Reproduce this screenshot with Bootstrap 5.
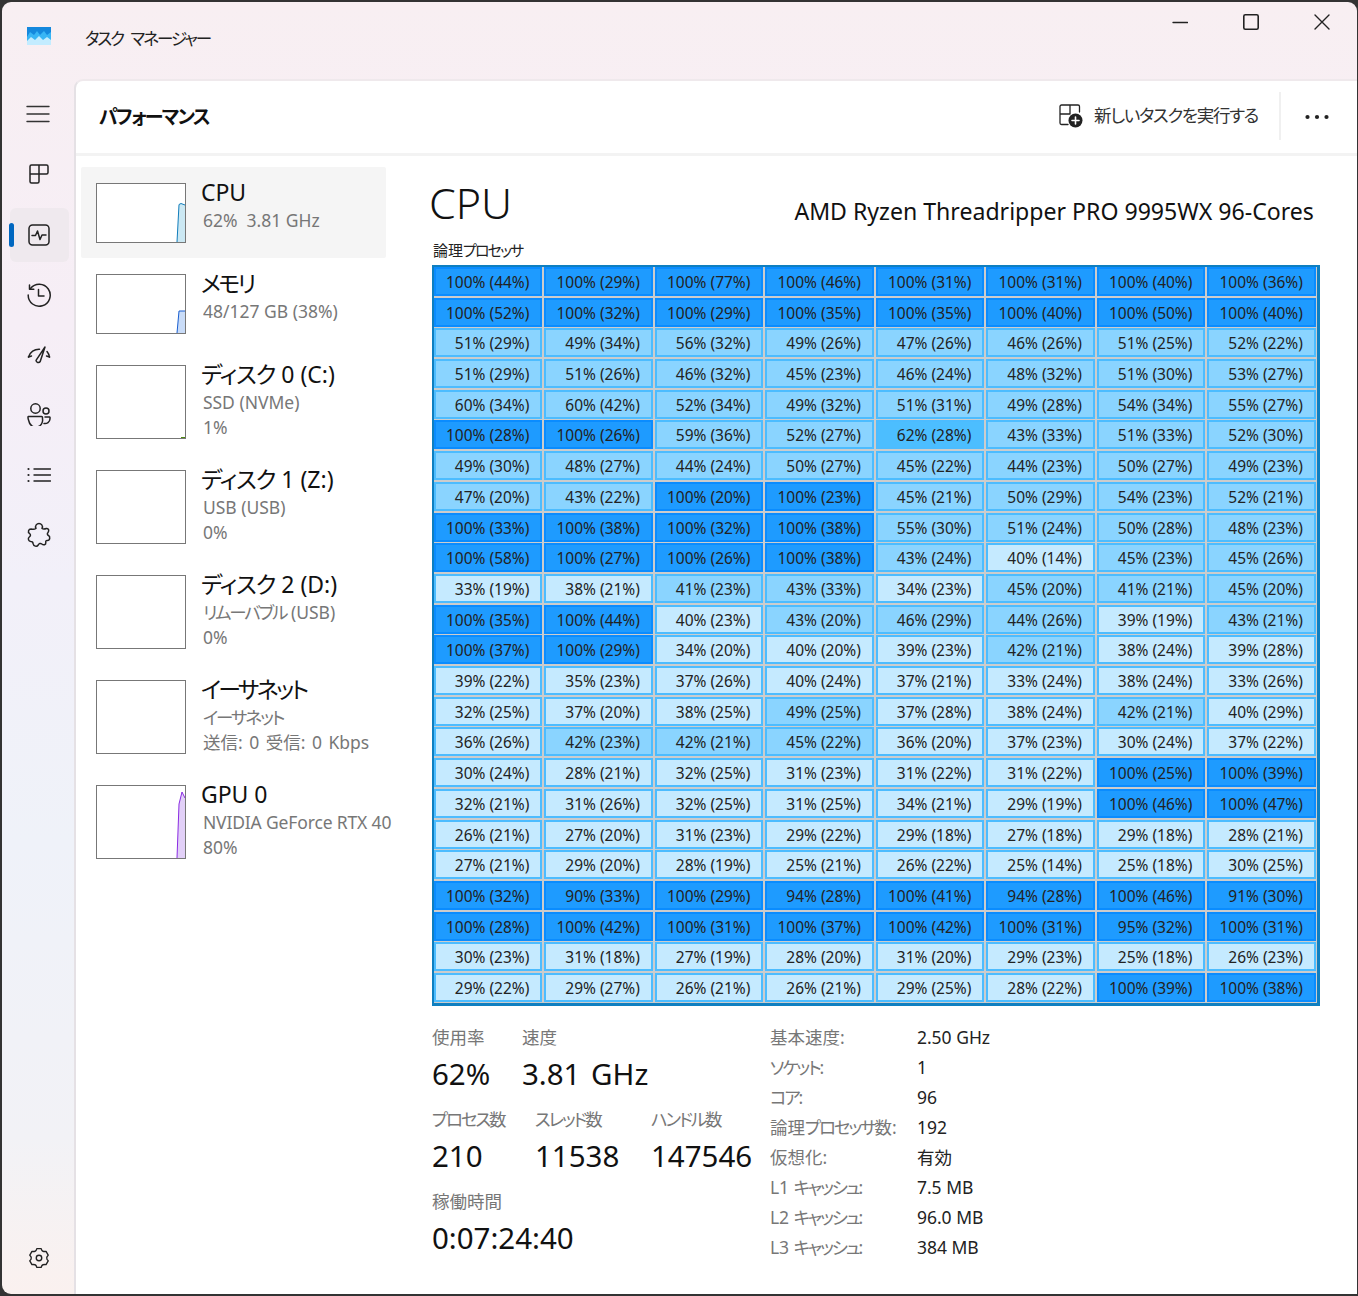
<!doctype html>
<html lang="ja"><head><meta charset="utf-8"><title>タスク マネージャー</title>
<link href="https://cdn.jsdelivr.net/npm/bootstrap@5.3.0/dist/css/bootstrap.min.css" rel="stylesheet">
<style>
html,body{height:1296px;overflow:hidden}
body{background:#333;font-family:"Noto Sans","Noto Sans CJK JP",sans-serif;font-feature-settings:"palt";color:#111;padding:2px 1px 2px 2px}
.tm-win{height:1292px;border-radius:9px 9px 0 9px;background:linear-gradient(180deg,#f8eff2 0,#f6eef6 25%,#f2f0f9 45%,#eff2f9 65%,#f2f2f6 88%,#faf1ef 100%);overflow:hidden}
.tm-title{height:77px}
.tm-appname{font-size:16.5px;letter-spacing:-.12em;word-spacing:5px;margin-left:83px;margin-top:-3px;color:#222;width:1000px}
.tm-logo{position:absolute}
.tm-ctl{height:42px;width:71px}
.tm-side{width:72px;padding:9px 0;gap:6.14px}
.tm-nav{width:59px;height:54px;margin-left:8px;border-radius:6px}
.tm-nav svg{margin-right:1px}
.tm-nav svg.tm-ham{margin:0 3px 2px 0}
.tm-nav svg.tm-up{margin-bottom:2px}
.tm-nav svg.tm-up2{margin-bottom:4px}
.tm-nav.tm-on{background:#efe9ee}
.tm-ind{position:absolute;left:-1px;top:15px;width:5px;height:24px;background:#0067c0;border-radius:3px}
.tm-panel{background:#fff;border-left:2px solid #e5e1e5;border-top:2px solid #efe9ec;border-top-left-radius:9px;min-width:0}
.tm-cmd{height:75px;border-bottom:3px solid #f3f3f3;padding-left:23px}
.tm-h1{font-size:19px;letter-spacing:-.09em;font-weight:600;margin:1px 0 0;color:#111}
.tm-cmdic{margin-top:-2px}
.tm-run{font-size:17.5px;letter-spacing:-1.3px;color:#333;margin:-3px 0 0 11px}
.tm-vline{width:2px;height:48px;background:#f0f0f0;margin:-3px 0 0 21px}
.tm-dots{margin-left:24px}
.tm-list{width:325px;padding-top:11px;overflow:hidden;flex:none}
.tm-item{padding:16px 0 15px 15px;margin-left:5px;width:305px;white-space:nowrap}
.tm-item.tm-sel{background:#f5f5f5;border-radius:2px}
.tm-thumb{width:90px;flex:none;border:1px solid #777;background:#fff;display:block}
.tm-t60{height:60px}.tm-t74{height:74px}
.tm-itxt{margin:-4px 0 -6px 15px;overflow:visible}
.tm-iname{font-size:23px;line-height:26px;color:#111;margin-bottom:3px}
.tm-isub{font-size:17.5px;line-height:25px;color:#777;margin-left:2px;width:196px;overflow:hidden}
.tm-send{word-spacing:2px}
.tm-gpu{letter-spacing:-.15px}
.tm-kana{letter-spacing:-.12em}
.tm-kana2{letter-spacing:-.05em}
.tm-detail{width:958px;padding-left:29px;padding-top:19px}
.tm-cpu{font-size:43px;font-weight:300;line-height:56px;margin:0 0 0 -1px;color:#111}
.tm-model{font-size:23.1px;color:#111;margin:19px 1px 0 0}
.tm-lp{font-size:15px;line-height:20px;margin:9px 0 5px 3px;color:#222}
.tm-grid{margin-left:2px;width:888px;height:741px;background:#ccc;border:solid #0f7fc0;border-width:2px 3px 3px 2px;padding:0 1px 1px 0;display:grid;grid-template-columns:repeat(8,1fr);grid-template-rows:repeat(24,1fr);column-gap:2px;row-gap:1.7px}
.tm-c{border:2px solid #4cbcff;font-size:15.5px;color:#222;text-align:right;padding:1px 11px 0 0;line-height:24px;white-space:nowrap}
.hl{background:#c5eaff}.hm{background:#8ad4ff}.hh{background:#4cbeff}.hf{background:#1e9bff;border-color:#0a8cff}
.tm-stats{margin:16px 0 0 2px}
.tm-left{width:338px}
.tm-lab{font-size:17.5px;line-height:30px;color:#777;white-space:nowrap}
.tm-val{font-size:29.5px;line-height:44px;color:#111;white-space:nowrap;word-spacing:3px}
.tm-gr{margin-bottom:8px}
.w90{width:90px}.w103{width:103px}.w116{width:116px}
.tm-kl{width:147px;font-size:17.5px;line-height:30px;color:#777;white-space:nowrap}
.tm-kv{font-size:17.5px;line-height:30px;color:#222}
.ic{fill:none;stroke:#222;stroke-width:1.5;stroke-linecap:round;stroke-linejoin:round;display:block}
</style></head><body>
<div class="tm-win d-flex flex-column position-relative">
<header class="tm-title d-flex position-relative">
<svg class="tm-logo" style="left:25px;top:25px" width="24" height="18" viewBox="0 0 24 18"><rect width="24" height="18" fill="#1488dd"/><path d="M0 10 L3 5 L7 8 L10 4 L13 8 L17 4 L20 8 L24 5 V18 H0Z" fill="#38b5f5"/><path d="M0 14 L4 10 L8 13 L12 9 L16 13 L20 10 L24 13 V18 H0Z" fill="#c3ecff"/></svg>
<div class="tm-appname d-flex align-items-center"><span>タスク マネージャー</span></div>
<div class="ms-auto d-flex" style="margin-top:-1px">
<div class="tm-ctl d-flex align-items-center justify-content-center"><svg class="ic" width="16" height="16" viewBox="0 0 16 16"><path d="M1 8.5H15.5" stroke-width="1.3"/></svg></div>
<div class="tm-ctl d-flex align-items-center justify-content-center"><svg class="ic" width="16" height="16" viewBox="0 0 16 16"><rect x=".8" y=".8" width="14.4" height="14.4" rx="1.5" stroke-width="1.6"/></svg></div>
<div class="tm-ctl d-flex align-items-center justify-content-center"><svg class="ic" width="16" height="16" viewBox="0 0 16 16"><path d="M1 1L15 15M15 1L1 15" stroke-width="1.4"/></svg></div>
</div>
</header>
<div class="d-flex flex-grow-1" style="min-height:0">
<nav class="tm-side d-flex flex-column">
<div class="tm-nav d-flex align-items-center justify-content-center"><svg class="ic tm-ham" width="24" height="20" viewBox="0 0 24 20"><path d="M1 2.5H23M1 10H23M1 17.5H23" stroke="#333" stroke-width="1.4"/></svg></div>
<div class="tm-nav d-flex align-items-center justify-content-center"><svg class="ic tm-up" width="20" height="20" viewBox="0 0 20 20"><path d="M1 10V2.5A1.5 1.5 0 0 1 2.500 1H17.500A1.500 1.500 0 0 1 19 2.500V8.500A1.500 1.500 0 0 1 17.500 10H1ZM1 10V17.500A1.500 1.500 0 0 0 2.500 19H8.500A1.500 1.500 0 0 0 10 17.500V1"/></svg></div>
<div class="tm-nav tm-on d-flex align-items-center justify-content-center position-relative"><span class="tm-ind"></span><svg class="ic" width="22" height="22" viewBox="0 0 22 22"><rect x="1" y="1" width="20" height="20" rx="3.500"/><path d="M4 11.500H7.500L9.500 7 12 15.500 14 11H18"/></svg></div>
<div class="tm-nav d-flex align-items-center justify-content-center"><svg class="ic" width="26" height="26" viewBox="0 0 26 26"><path d="M4.500 6.500A11 11 0 1 1 2.200 13"/><path d="M3.500 3V7.200H7.800"/><path d="M12.500 7.500V14H18"/></svg></div>
<div class="tm-nav d-flex align-items-center justify-content-center"><svg class="ic" width="24" height="20" viewBox="0 0 24 20"><path d="M1.500 11A11 11 0 0 1 12.500 3.200M20 5.500A11 11 0 0 1 22.500 11"/><path d="M1.500 11l3-1M22.500 11l-3-1"/><path d="M18 1L13.200 15.500A2.300 2.300 0 0 1 9 14.300Z"/></svg></div>
<div class="tm-nav d-flex align-items-center justify-content-center"><svg class="ic tm-up2" width="24" height="24" viewBox="0 0 24 24"><circle cx="8.500" cy="6.500" r="4.700"/><circle cx="19" cy="9" r="3"/><path d="M1.500 14.500H14.500A1 1 0 0 1 15.500 15.500V17A6.500 6.500 0 0 1 2 19.500 C1.500 18 1 17 1 15.500A1 1 0 0 1 1.500 14.500Z"/><path d="M18 15H22.500A.8.8 0 0 1 23 16V17A5 5 0 0 1 17 21.500"/></svg></div>
<div class="tm-nav d-flex align-items-center justify-content-center"><svg class="ic tm-up" width="24" height="16" viewBox="0 0 24 16"><path d="M7 2H23.500M7 8H23.500M7 14H23.500" stroke-width="1.400"/><circle cx="1.500" cy="2" r="1.100" fill="#222" stroke="none"/><circle cx="1.500" cy="8" r="1.100" fill="#222" stroke="none"/><circle cx="1.500" cy="14" r="1.100" fill="#222" stroke="none"/></svg></div>
<div class="tm-nav d-flex align-items-center justify-content-center"><svg class="ic tm-up" width="24" height="26" viewBox="0 0 24 26"><path d="M9 6.500C7.500 3.500 10 1.500 12 1.500S16.500 3.500 15 6.500C16.500 7.500 18 7 19.500 6.500C21.500 6.200 22.500 8.500 21 10.500C20 11.500 20.200 13 21.500 13.500C23.500 14.500 23 18.500 20.500 18.500C19 18.300 18.500 19 18.800 20.500C19 22.800 16.500 23.500 14.800 22C13.500 21 12 21.500 11.200 23C10 25 6.500 24.500 6 21.500C6 20 5 19.500 3.800 19.500C1.500 19.300 .5 16.500 2.300 15C3.800 14 3.800 12.500 2.500 11.500C.5 10 1.500 7 4 7C6 7.500 7.500 7.500 9 6.500Z"/></svg></div>
<div class="tm-nav d-flex align-items-center justify-content-center mt-auto"><svg class="ic" width="22" height="22" viewBox="0 0 24 24"><path d="M9.640 1.770L14.360 1.770Q15 4.300 16.250 4.640Q17.500 5 19.680 4.840L22.040 8.930Q20.200 10.500 20.500 12Q20.200 13.500 22.040 15.070L19.680 19.160Q17.500 19 16.250 19.360Q15 19.700 14.360 22.230L9.640 22.230Q9 19.700 7.750 19.360Q6.500 19 4.320 19.160L1.960 15.070Q3.800 13.500 3.500 12Q3.800 10.500 1.960 8.930L4.320 4.840Q6.500 5 7.750 4.640Q9 4.300 9.640 1.770Z"/><circle cx="12" cy="12" r="3"/></svg></div>
</nav>
<main class="tm-panel flex-grow-1 d-flex flex-column">
<div class="tm-cmd d-flex align-items-center">
<h1 class="tm-h1">パフォーマンス</h1>
<div class="ms-auto d-flex align-items-center" style="margin-right:28px">
<svg width="24" height="24" viewBox="0 0 24 24" class="ic tm-cmdic"><path d="M1 11V2.500A1.500 1.500 0 0 1 2.500 1H19A1.500 1.500 0 0 1 20.500 2.500V8M1 10H11M11 1V10M1 10V19A1.500 1.500 0 0 0 2.500 20.500H9" stroke-width="1.300"/><circle cx="16.500" cy="16.500" r="7" fill="#222" stroke="none"/><path d="M16.500 13V20M13 16.500H20" stroke="#fff" stroke-width="1.600"/></svg>
<span class="tm-run">新しいタスクを実行する</span>
<span class="tm-vline"></span>
<svg class="tm-dots" width="24" height="6" viewBox="0 0 24 6" fill="#222"><circle cx="2.500" cy="3" r="2.100"/><circle cx="12" cy="3" r="2.100"/><circle cx="21.500" cy="3" r="2.100"/></svg>
</div>
</div>
<div class="d-flex flex-grow-1" style="min-height:0">
<aside class="tm-list">
<div class="tm-item tm-sel d-flex"><svg class="tm-thumb tm-t60" viewBox="0 0 88 58" preserveAspectRatio="none"><path d="M80 58L82 20.500 84 19.500 88 21V58Z" fill="#cbe8f3"/><path d="M80 58L82 20.500 84 19.500 88 21" fill="none" stroke="#117dbb"/></svg><div class="tm-itxt"><div class="tm-iname">CPU</div><div class="tm-isub">62%&nbsp; 3.81 GHz</div></div></div>
<div class="tm-item d-flex"><svg class="tm-thumb tm-t60" viewBox="0 0 88 58" preserveAspectRatio="none"><path d="M80 58L82 36H88V58Z" fill="#c9dcf8"/><path d="M80 58L82 36H88" fill="none" stroke="#1a5fd0"/></svg><div class="tm-itxt"><div class="tm-iname"><span class="tm-kana">メモリ</span></div><div class="tm-isub">48/127 GB (38%)</div></div></div>
<div class="tm-item d-flex"><svg class="tm-thumb tm-t74" viewBox="0 0 88 72" preserveAspectRatio="none"><path d="M84 71.500H88" stroke="#4d8a10"/></svg><div class="tm-itxt"><div class="tm-iname"><span class="tm-kana2">ディスク</span> 0 (C:)</div><div class="tm-isub">SSD (NVMe)</div><div class="tm-isub">1%</div></div></div>
<div class="tm-item d-flex"><svg class="tm-thumb tm-t74" viewBox="0 0 88 72"></svg><div class="tm-itxt"><div class="tm-iname"><span class="tm-kana2">ディスク</span> 1 (Z:)</div><div class="tm-isub">USB (USB)</div><div class="tm-isub">0%</div></div></div>
<div class="tm-item d-flex"><svg class="tm-thumb tm-t74" viewBox="0 0 88 72"></svg><div class="tm-itxt"><div class="tm-iname"><span class="tm-kana2">ディスク</span> 2 (D:)</div><div class="tm-isub"><span class="tm-kana">リムーバブル</span> (USB)</div><div class="tm-isub">0%</div></div></div>
<div class="tm-item d-flex"><svg class="tm-thumb tm-t74" viewBox="0 0 88 72"></svg><div class="tm-itxt"><div class="tm-iname"><span class="tm-kana">イーサネット</span></div><div class="tm-isub"><span class="tm-kana">イーサネット</span></div><div class="tm-isub tm-send">送信: 0 受信: 0 Kbps</div></div></div>
<div class="tm-item d-flex"><svg class="tm-thumb tm-t74" viewBox="0 0 88 72" preserveAspectRatio="none"><path d="M80 72L82 18 85 6 88 12V72Z" fill="#e2d0f8"/><path d="M80 72L82 18 85 6 88 12" fill="none" stroke="#8a2be2"/></svg><div class="tm-itxt"><div class="tm-iname">GPU 0</div><div class="tm-isub tm-gpu">NVIDIA GeForce RTX 40</div><div class="tm-isub">80%</div></div></div>
</aside>
<section class="tm-detail">
<div class="d-flex justify-content-between" style="width:885px"><h2 class="tm-cpu">CPU</h2><div class="tm-model">AMD Ryzen Threadripper PRO 9995WX 96-Cores</div></div>
<div class="tm-lp">論理<span class="tm-kana">プロセッサ</span></div>
<div class="tm-grid">
<div class="tm-c hf">100% (44%)</div><div class="tm-c hf">100% (29%)</div><div class="tm-c hf">100% (77%)</div><div class="tm-c hf">100% (46%)</div><div class="tm-c hf">100% (31%)</div><div class="tm-c hf">100% (31%)</div><div class="tm-c hf">100% (40%)</div><div class="tm-c hf">100% (36%)</div>
<div class="tm-c hf">100% (52%)</div><div class="tm-c hf">100% (32%)</div><div class="tm-c hf">100% (29%)</div><div class="tm-c hf">100% (35%)</div><div class="tm-c hf">100% (35%)</div><div class="tm-c hf">100% (40%)</div><div class="tm-c hf">100% (50%)</div><div class="tm-c hf">100% (40%)</div>
<div class="tm-c hm">51% (29%)</div><div class="tm-c hm">49% (34%)</div><div class="tm-c hm">56% (32%)</div><div class="tm-c hm">49% (26%)</div><div class="tm-c hm">47% (26%)</div><div class="tm-c hm">46% (26%)</div><div class="tm-c hm">51% (25%)</div><div class="tm-c hm">52% (22%)</div>
<div class="tm-c hm">51% (29%)</div><div class="tm-c hm">51% (26%)</div><div class="tm-c hm">46% (32%)</div><div class="tm-c hm">45% (23%)</div><div class="tm-c hm">46% (24%)</div><div class="tm-c hm">48% (32%)</div><div class="tm-c hm">51% (30%)</div><div class="tm-c hm">53% (27%)</div>
<div class="tm-c hm">60% (34%)</div><div class="tm-c hm">60% (42%)</div><div class="tm-c hm">52% (34%)</div><div class="tm-c hm">49% (32%)</div><div class="tm-c hm">51% (31%)</div><div class="tm-c hm">49% (28%)</div><div class="tm-c hm">54% (34%)</div><div class="tm-c hm">55% (27%)</div>
<div class="tm-c hf">100% (28%)</div><div class="tm-c hf">100% (26%)</div><div class="tm-c hm">59% (36%)</div><div class="tm-c hm">52% (27%)</div><div class="tm-c hh">62% (28%)</div><div class="tm-c hm">43% (33%)</div><div class="tm-c hm">51% (33%)</div><div class="tm-c hm">52% (30%)</div>
<div class="tm-c hm">49% (30%)</div><div class="tm-c hm">48% (27%)</div><div class="tm-c hm">44% (24%)</div><div class="tm-c hm">50% (27%)</div><div class="tm-c hm">45% (22%)</div><div class="tm-c hm">44% (23%)</div><div class="tm-c hm">50% (27%)</div><div class="tm-c hm">49% (23%)</div>
<div class="tm-c hm">47% (20%)</div><div class="tm-c hm">43% (22%)</div><div class="tm-c hf">100% (20%)</div><div class="tm-c hf">100% (23%)</div><div class="tm-c hm">45% (21%)</div><div class="tm-c hm">50% (29%)</div><div class="tm-c hm">54% (23%)</div><div class="tm-c hm">52% (21%)</div>
<div class="tm-c hf">100% (33%)</div><div class="tm-c hf">100% (38%)</div><div class="tm-c hf">100% (32%)</div><div class="tm-c hf">100% (38%)</div><div class="tm-c hm">55% (30%)</div><div class="tm-c hm">51% (24%)</div><div class="tm-c hm">50% (28%)</div><div class="tm-c hm">48% (23%)</div>
<div class="tm-c hf">100% (58%)</div><div class="tm-c hf">100% (27%)</div><div class="tm-c hf">100% (26%)</div><div class="tm-c hf">100% (38%)</div><div class="tm-c hm">43% (24%)</div><div class="tm-c hl">40% (14%)</div><div class="tm-c hm">45% (23%)</div><div class="tm-c hm">45% (26%)</div>
<div class="tm-c hl">33% (19%)</div><div class="tm-c hl">38% (21%)</div><div class="tm-c hm">41% (23%)</div><div class="tm-c hm">43% (33%)</div><div class="tm-c hl">34% (23%)</div><div class="tm-c hm">45% (20%)</div><div class="tm-c hm">41% (21%)</div><div class="tm-c hm">45% (20%)</div>
<div class="tm-c hf">100% (35%)</div><div class="tm-c hf">100% (44%)</div><div class="tm-c hl">40% (23%)</div><div class="tm-c hm">43% (20%)</div><div class="tm-c hm">46% (29%)</div><div class="tm-c hm">44% (26%)</div><div class="tm-c hl">39% (19%)</div><div class="tm-c hm">43% (21%)</div>
<div class="tm-c hf">100% (37%)</div><div class="tm-c hf">100% (29%)</div><div class="tm-c hl">34% (20%)</div><div class="tm-c hl">40% (20%)</div><div class="tm-c hl">39% (23%)</div><div class="tm-c hm">42% (21%)</div><div class="tm-c hl">38% (24%)</div><div class="tm-c hl">39% (28%)</div>
<div class="tm-c hl">39% (22%)</div><div class="tm-c hl">35% (23%)</div><div class="tm-c hl">37% (26%)</div><div class="tm-c hl">40% (24%)</div><div class="tm-c hl">37% (21%)</div><div class="tm-c hl">33% (24%)</div><div class="tm-c hl">38% (24%)</div><div class="tm-c hl">33% (26%)</div>
<div class="tm-c hl">32% (25%)</div><div class="tm-c hl">37% (20%)</div><div class="tm-c hl">38% (25%)</div><div class="tm-c hm">49% (25%)</div><div class="tm-c hl">37% (28%)</div><div class="tm-c hl">38% (24%)</div><div class="tm-c hm">42% (21%)</div><div class="tm-c hl">40% (29%)</div>
<div class="tm-c hl">36% (26%)</div><div class="tm-c hm">42% (23%)</div><div class="tm-c hm">42% (21%)</div><div class="tm-c hm">45% (22%)</div><div class="tm-c hl">36% (20%)</div><div class="tm-c hl">37% (23%)</div><div class="tm-c hl">30% (24%)</div><div class="tm-c hl">37% (22%)</div>
<div class="tm-c hl">30% (24%)</div><div class="tm-c hl">28% (21%)</div><div class="tm-c hl">32% (25%)</div><div class="tm-c hl">31% (23%)</div><div class="tm-c hl">31% (22%)</div><div class="tm-c hl">31% (22%)</div><div class="tm-c hf">100% (25%)</div><div class="tm-c hf">100% (39%)</div>
<div class="tm-c hl">32% (21%)</div><div class="tm-c hl">31% (26%)</div><div class="tm-c hl">32% (25%)</div><div class="tm-c hl">31% (25%)</div><div class="tm-c hl">34% (21%)</div><div class="tm-c hl">29% (19%)</div><div class="tm-c hf">100% (46%)</div><div class="tm-c hf">100% (47%)</div>
<div class="tm-c hl">26% (21%)</div><div class="tm-c hl">27% (20%)</div><div class="tm-c hl">31% (23%)</div><div class="tm-c hl">29% (22%)</div><div class="tm-c hl">29% (18%)</div><div class="tm-c hl">27% (18%)</div><div class="tm-c hl">29% (18%)</div><div class="tm-c hl">28% (21%)</div>
<div class="tm-c hl">27% (21%)</div><div class="tm-c hl">29% (20%)</div><div class="tm-c hl">28% (19%)</div><div class="tm-c hl">25% (21%)</div><div class="tm-c hl">26% (22%)</div><div class="tm-c hl">25% (14%)</div><div class="tm-c hl">25% (18%)</div><div class="tm-c hl">30% (25%)</div>
<div class="tm-c hf">100% (32%)</div><div class="tm-c hf">90% (33%)</div><div class="tm-c hf">100% (29%)</div><div class="tm-c hf">94% (28%)</div><div class="tm-c hf">100% (41%)</div><div class="tm-c hf">94% (28%)</div><div class="tm-c hf">100% (46%)</div><div class="tm-c hf">91% (30%)</div>
<div class="tm-c hf">100% (28%)</div><div class="tm-c hf">100% (42%)</div><div class="tm-c hf">100% (31%)</div><div class="tm-c hf">100% (37%)</div><div class="tm-c hf">100% (42%)</div><div class="tm-c hf">100% (31%)</div><div class="tm-c hf">95% (32%)</div><div class="tm-c hf">100% (31%)</div>
<div class="tm-c hl">30% (23%)</div><div class="tm-c hl">31% (18%)</div><div class="tm-c hl">27% (19%)</div><div class="tm-c hl">28% (20%)</div><div class="tm-c hl">31% (20%)</div><div class="tm-c hl">29% (23%)</div><div class="tm-c hl">25% (18%)</div><div class="tm-c hl">26% (23%)</div>
<div class="tm-c hl">29% (22%)</div><div class="tm-c hl">29% (27%)</div><div class="tm-c hl">26% (21%)</div><div class="tm-c hl">26% (21%)</div><div class="tm-c hl">29% (25%)</div><div class="tm-c hl">28% (22%)</div><div class="tm-c hf">100% (39%)</div><div class="tm-c hf">100% (38%)</div>
</div>
<div class="tm-stats d-flex">
<div class="tm-left">
<div class="d-flex tm-gr"><div class="w90"><div class="tm-lab">使用率</div><div class="tm-val">62%</div></div><div><div class="tm-lab">速度</div><div class="tm-val">3.81 GHz</div></div></div>
<div class="d-flex tm-gr"><div class="w103"><div class="tm-lab"><span class="tm-kana">プロセス数</span></div><div class="tm-val">210</div></div><div class="w116"><div class="tm-lab"><span class="tm-kana">スレッド数</span></div><div class="tm-val">11538</div></div><div><div class="tm-lab"><span class="tm-kana">ハンドル数</span></div><div class="tm-val">147546</div></div></div>
<div><div class="tm-lab">稼働時間</div><div class="tm-val">0:07:24:40</div></div>
</div>
<div>
<div class="d-flex"><div class="tm-kl">基本速度:</div><div class="tm-kv">2.50 GHz</div></div>
<div class="d-flex"><div class="tm-kl"><span class="tm-kana">ソケット</span>:</div><div class="tm-kv">1</div></div>
<div class="d-flex"><div class="tm-kl"><span class="tm-kana">コア</span>:</div><div class="tm-kv">96</div></div>
<div class="d-flex"><div class="tm-kl">論理<span class="tm-kana">プロセッサ</span>数:</div><div class="tm-kv">192</div></div>
<div class="d-flex"><div class="tm-kl">仮想化:</div><div class="tm-kv">有効</div></div>
<div class="d-flex"><div class="tm-kl">L1 <span class="tm-kana">キャッシュ</span>:</div><div class="tm-kv">7.5 MB</div></div>
<div class="d-flex"><div class="tm-kl">L2 <span class="tm-kana">キャッシュ</span>:</div><div class="tm-kv">96.0 MB</div></div>
<div class="d-flex"><div class="tm-kl">L3 <span class="tm-kana">キャッシュ</span>:</div><div class="tm-kv">384 MB</div></div>
</div>
</div>
</section>
</div>
</main>
</div>
</div>
</body></html>
